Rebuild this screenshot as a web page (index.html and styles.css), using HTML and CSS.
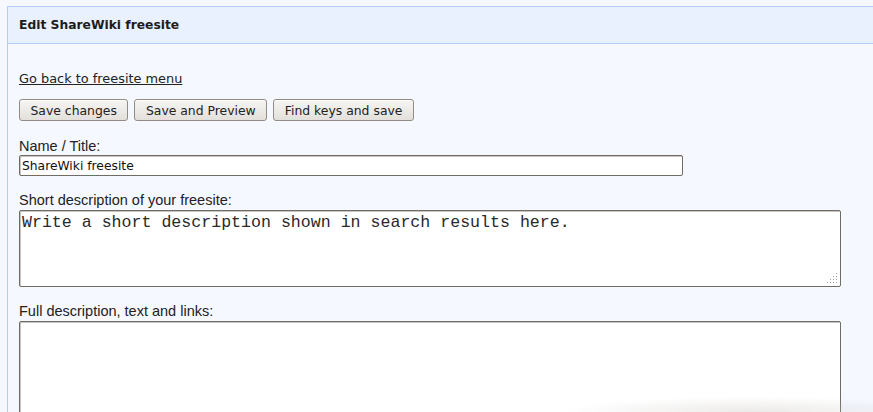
FILE: index.html
```html
<!DOCTYPE html>
<html lang="en">
<head>
<meta charset="utf-8">
<title>Edit ShareWiki freesite</title>
<link rel="stylesheet" href="styles.css">
</head>
<body>
<div class="panel">
  <div class="panel-header">Edit ShareWiki freesite</div>
  <div class="panel-body">
    <a class="back-link" href="#">Go back to freesite menu</a>
    <div class="button-row">
      <button class="btn" type="button">Save changes</button>
      <button class="btn" type="button">Save and Preview</button>
      <button class="btn" type="button">Find keys and save</button>
    </div>
    <div class="field">
      <label class="field-label" for="title">Name / Title:</label>
      <input class="text-input" id="title" type="text" value="ShareWiki freesite">
    </div>
    <div class="field">
      <label class="field-label" for="short">Short description of your freesite:</label>
      <div class="area-wrap">
        <textarea class="text-area short-area" id="short">Write a short description shown in search results here.</textarea>
        <svg class="grip" width="11" height="11" viewBox="0 0 11 11" aria-hidden="true">
          <rect x="9" y="0" width="1" height="1"/>
          <rect x="9" y="3" width="1" height="1"/>
          <rect x="6" y="3" width="1" height="1"/>
          <rect x="9" y="6" width="1" height="1"/>
          <rect x="6" y="6" width="1" height="1"/>
          <rect x="3" y="6" width="1" height="1"/>
          <rect x="9" y="9" width="1" height="1"/>
          <rect x="6" y="9" width="1" height="1"/>
          <rect x="3" y="9" width="1" height="1"/>
          <rect x="0" y="9" width="1" height="1"/>
        </svg>
      </div>
    </div>
    <div class="field">
      <label class="field-label" for="full">Full description, text and links:</label>
      <textarea class="text-area full-area" id="full"></textarea>
    </div>
  </div>
</div>
<div class="fade-shadow"></div>
</body>
</html>
```

FILE: styles.css
```css
html, body {
  margin: 0;
  padding: 0;
  background: #f5f8ff;
  overflow: hidden;
}

body {
  font-family: "DejaVu Sans", sans-serif;
  color: #222;
}

.panel {
  margin: 6px 0 0 7px;
  border: 1px solid #b3cdf7;
  border-right: none;
  background: #f5f8ff;
}

.panel-header {
  height: 36px;
  display: flex;
  align-items: center;
  padding-left: 11px;
  background: #e9f0fe;
  border-bottom: 1px solid #b3cdf7;
  font-family: "DejaVu Sans", sans-serif;
  font-weight: bold;
  font-size: 12.3px;
  color: #1c1c1c;
}

.panel-body {
  padding: 27px 0 0 11px;
  display: flex;
  flex-direction: column;
  align-items: flex-start;
}

.back-link {
  font-family: "DejaVu Sans", sans-serif;
  font-size: 12.9px;
  color: #222;
  text-decoration: underline;
  line-height: 15px;
}

.button-row {
  display: flex;
  gap: 6px;
  margin-top: 13px;
}

.btn {
  height: 22px;
  padding: 0 10.5px;
  font-family: "DejaVu Sans", sans-serif;
  font-size: 12.4px;
  color: #222;
  border: 1px solid #928c84;
  border-radius: 3px;
  background: linear-gradient(#f6f5f3, #e3e0db);
  box-shadow: inset 0 1px 0 #ffffff;
}

.field {
  display: flex;
  flex-direction: column;
  align-items: flex-start;
  margin-top: 16px;
}

.button-row + .field {
  margin-top: 17px;
}

.field-label {
  font-family: "Liberation Sans", Arial, sans-serif;
  font-size: 14.5px;
  line-height: 16px;
  color: #222;
  margin-bottom: 1px;
}

.text-input {
  box-sizing: border-box;
  width: 664px;
  height: 21px;
  margin: 0;
  padding: 0 2px;
  font-family: "DejaVu Sans", sans-serif;
  font-size: 12.3px;
  color: #111;
  background: #fff;
  border: 1px solid #6f6b65;
  border-radius: 2px;
  box-shadow: inset 1px 1px 0 #c9c6c1;
  outline: none;
}

.area-wrap {
  position: relative;
  margin-top: 1px;
}

.text-area {
  display: block;
  box-sizing: border-box;
  width: 822px;
  margin: 0;
  padding: 2px 2px;
  font-family: "Liberation Mono", "Courier New", monospace;
  font-size: 16.6px;
  line-height: 19px;
  color: #2a2a2a;
  background: #fff;
  border: 1px solid #6f6b65;
  border-radius: 2px;
  box-shadow: inset 1px 1px 0 #c9c6c1;
  resize: none;
  outline: none;
}

.short-area {
  height: 77px;
}

.full-area {
  height: 200px;
  margin-top: 1px;
}

.grip {
  position: absolute;
  right: 3px;
  bottom: 3px;
  fill: #a09c96;
}

.fade-shadow {
  position: fixed;
  left: 480px;
  right: 0;
  bottom: 0;
  height: 22px;
  background: radial-gradient(ellipse 70% 100% at 70% 100%, rgba(200, 195, 190, 0.35), rgba(200, 195, 190, 0) 70%);
  pointer-events: none;
}
```
